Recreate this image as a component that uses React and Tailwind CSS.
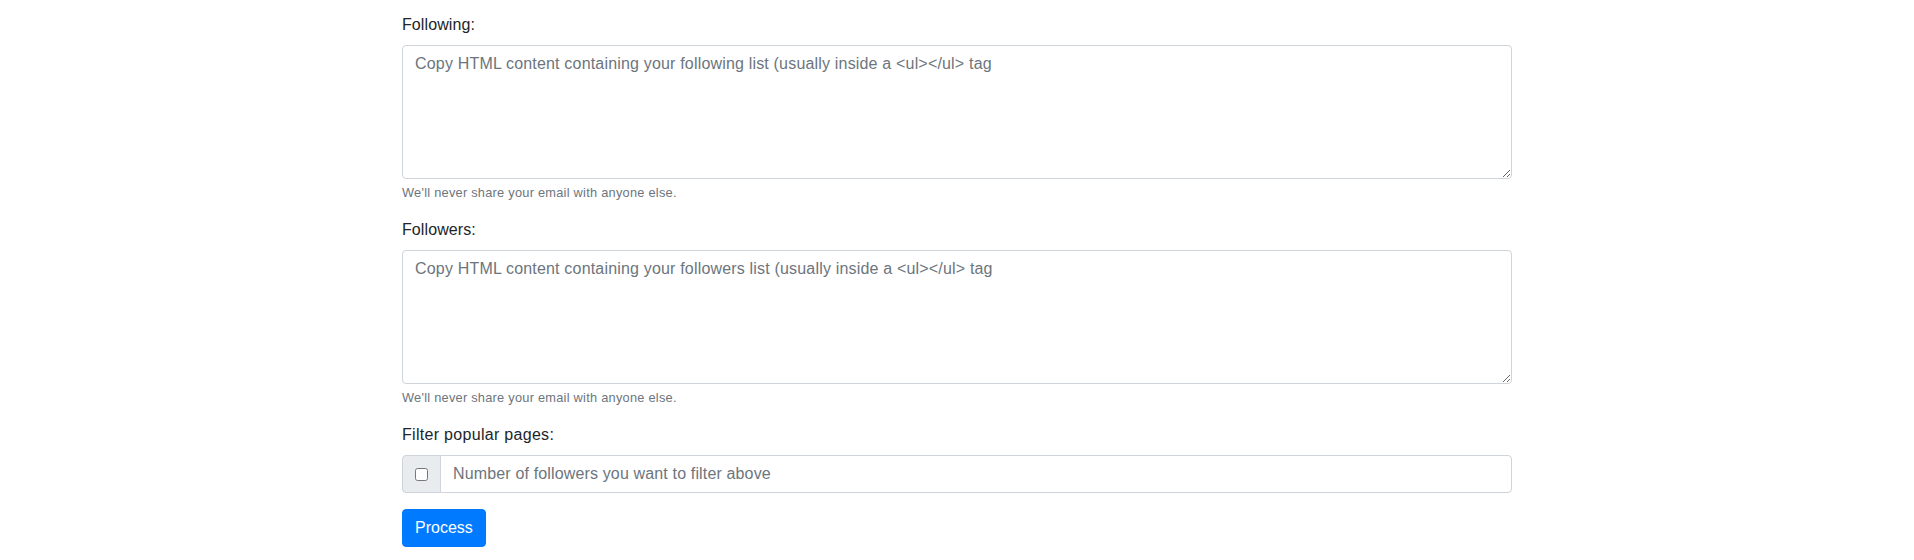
import React from "react";

function Group({ label, placeholder }) {
  return (
    <div className="mb-4">
      <label className="mb-2 block text-base leading-6 tracking-[0.1px] text-[#212529]">{label}</label>
      <textarea
        rows={5}
        placeholder={placeholder}
        className="block h-[134px] w-full rounded border border-[#ced4da] bg-white px-3 py-1.5 text-base leading-6 tracking-[0.18px] text-[#495057] outline-none placeholder:text-[#6c757d]"
      />
      <small className="mt-1 block text-[12.8px] leading-[19.2px] tracking-[0.25px] text-[#6c757d]">
        We'll never share your email with anyone else.
      </small>
    </div>
  );
}

export default function App() {
  return (
    <div className="min-h-[560px] bg-white font-['Liberation_Sans',Arial,sans-serif] text-[#212529]">
      <div className="mx-auto w-[1140px] px-[15px] pt-[13px]">
        <Group
          label="Following:"
          placeholder="Copy HTML content containing your following list (usually inside a <ul></ul> tag"
        />
        <Group
          label="Followers:"
          placeholder="Copy HTML content containing your followers list (usually inside a <ul></ul> tag"
        />
        <div className="mb-4">
          <label className="mb-2 block text-base leading-6 tracking-[0.3px] text-[#212529]">Filter popular pages:</label>
          <div className="flex h-[38px] w-full">
            <div className="flex items-center rounded-l border border-[#ced4da] bg-[#e9ecef] px-3">
              <input type="checkbox" className="m-0 h-[13px] w-[13px]" />
            </div>
            <input
              type="text"
              placeholder="Number of followers you want to filter above"
              className="-ml-px h-[38px] flex-1 rounded-r border border-[#ced4da] bg-white px-3 py-1.5 text-base leading-6 tracking-[0.15px] text-[#495057] outline-none placeholder:text-[#6c757d]"
            />
          </div>
        </div>
        <button className="rounded border border-[#007bff] bg-[#007bff] px-3 py-1.5 text-base leading-6 text-white">
          Process
        </button>
      </div>
    </div>
  );
}
